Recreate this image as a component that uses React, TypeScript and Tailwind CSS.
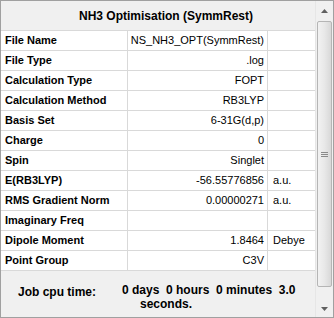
import React from "react";

const rows: [string, string, string][] = [
  ["File Name", "NS_NH3_OPT(SymmRest)", ""],
  ["File Type", ".log", ""],
  ["Calculation Type", "FOPT", ""],
  ["Calculation Method", "RB3LYP", ""],
  ["Basis Set", "6-31G(d,p)", ""],
  ["Charge", "0", ""],
  ["Spin", "Singlet", ""],
  ["E(RB3LYP)", "-56.55776856", "a.u."],
  ["RMS Gradient Norm", "0.00000271", "a.u."],
  ["Imaginary Freq", "", ""],
  ["Dipole Moment", "1.8464", "Debye"],
  ["Point Group", "C3V", ""],
];

export default function App() {
  return (
    <div
      className="w-[334px] h-[318px] bg-[#f0f0f0] border border-[#a0a0a0] flex text-[11px] text-black overflow-hidden"
      style={{ fontFamily: '"Liberation Sans", Arial, sans-serif' }}
    >
      <div className="flex-1 flex flex-col min-w-0">
        <div className="h-[30px] border-b border-[#d9d9d9] flex items-center justify-center pl-[16px] font-bold text-[12px]">
          NH3 Optimisation (SymmRest)
        </div>
        <div className="bg-white">
          {rows.map(([k, v, u]) => (
            <div key={k} className="flex h-[20px] border-b border-[#d9d9d9]">
              <div className="w-[127px] border-r border-[#d9d9d9] pl-[4px] flex items-center font-bold">
                {k}
              </div>
              <div className="w-[140px] border-r border-[#d9d9d9] pr-[3px] flex items-center justify-end">
                {v}
              </div>
              <div className="flex-1 pl-[5px] flex items-center">{u}</div>
            </div>
          ))}
        </div>
        <div className="flex-1 flex font-bold text-[12px] pt-[12px]">
          <div className="w-[121px] pl-[17px]">Job cpu time:</div>
          <div className="flex-1 leading-[14px]">
            <div className="whitespace-pre">0 days  0 hours  0 minutes  3.0</div>
            <div className="pl-[18px]">seconds.</div>
          </div>
        </div>
      </div>
      <div className="w-[18px] flex flex-col bg-[#f0f0f0] border-l border-[#e6e6e6]">
        <div className="h-[19px] flex items-center justify-center">
          <svg width="7" height="4" viewBox="0 0 7 4">
            <path d="M3.5 0 L7 4 L0 4 Z" fill="#606060" />
          </svg>
        </div>
        <div className="flex-1 px-[1px] pt-[1px] pb-[13px] flex">
          <div className="flex-1 rounded-[2px] border border-[#b5b5b5] bg-gradient-to-r from-[#f2f2f2] via-[#e8e8e8] to-[#d8d8d8] flex items-center justify-center">
            <svg width="7" height="7" viewBox="0 0 7 7">
              <path d="M0 1.5 H7 M0 3.5 H7 M0 5.5 H7" stroke="#8a8a8a" strokeWidth="1" />
            </svg>
          </div>
        </div>
        <div className="h-[17px] flex items-center justify-center">
          <svg width="7" height="4" viewBox="0 0 7 4">
            <path d="M0 0 L7 0 L3.5 4 Z" fill="#606060" />
          </svg>
        </div>
      </div>
    </div>
  );
}
